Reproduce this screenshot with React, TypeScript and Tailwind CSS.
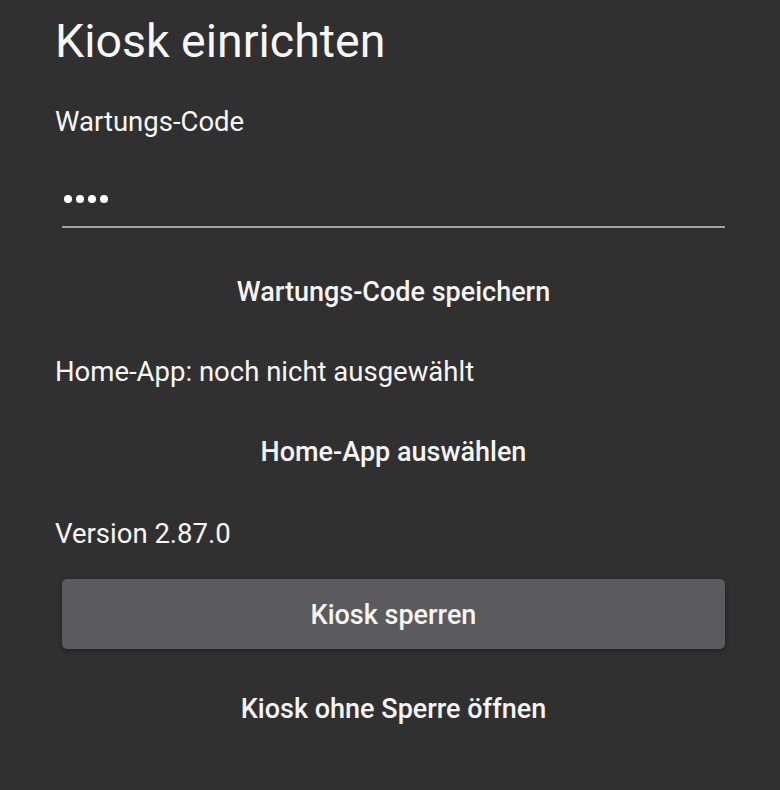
import React from 'react'

const font = { fontFamily: 'Roboto, "Noto Sans", sans-serif' }

const TextButton: React.FC<{ label: string; className?: string }> = ({ label, className }) => (
  <div className={`ml-[7px] flex items-center justify-center ${className ?? ''}`}>
    <button className="text-[27px] leading-none font-medium text-[#f5f5f5]">{label}</button>
  </div>
)

export default function App() {
  return (
    <div className="h-[790px] w-[780px] overflow-hidden bg-[#303030] px-[55px] text-[#f7f7f7]" style={font}>
      <div className="flex h-[83px] items-center">
        <h1 className="text-[46.5px] leading-none font-normal">Kiosk einrichten</h1>
      </div>

      <div className="flex h-[78px] items-center">
        <span className="text-[27.5px] leading-none">Wartungs-Code</span>
      </div>

      <div className="mt-[15px] ml-[7px] flex h-[52px] items-center border-b-2 border-[#a3a3a3] pb-1 pl-[2px]">
        <div className="flex gap-1" aria-label="Passwort">
          <span className="h-2 w-2 rounded-full bg-white" />
          <span className="h-2 w-2 rounded-full bg-white" />
          <span className="h-2 w-2 rounded-full bg-white" />
          <span className="h-2 w-2 rounded-full bg-white" />
        </div>
      </div>

      <TextButton label="Wartungs-Code speichern" className="mt-6 h-20" />

      <div className="flex h-20 items-center">
        <span className="text-[27.5px] leading-none">Home-App: noch nicht ausgewählt</span>
      </div>

      <TextButton label="Home-App auswählen" className="h-20" />

      <div className="flex h-[84px] items-center">
        <span className="text-[27.5px] leading-none">Version 2.87.0</span>
      </div>

      <button className="mt-[3px] ml-[7px] flex h-[70px] w-[663px] items-center justify-center rounded-[5px] bg-[#5b5b5d] pt-[2px] text-[27px] leading-none font-medium text-[#f5f5f5] shadow-[0_2px_4px_rgba(0,0,0,0.35)]">
        Kiosk sperren
      </button>

      <TextButton label="Kiosk ohne Sperre öffnen" className="mt-5 h-20" />
    </div>
  )
}
